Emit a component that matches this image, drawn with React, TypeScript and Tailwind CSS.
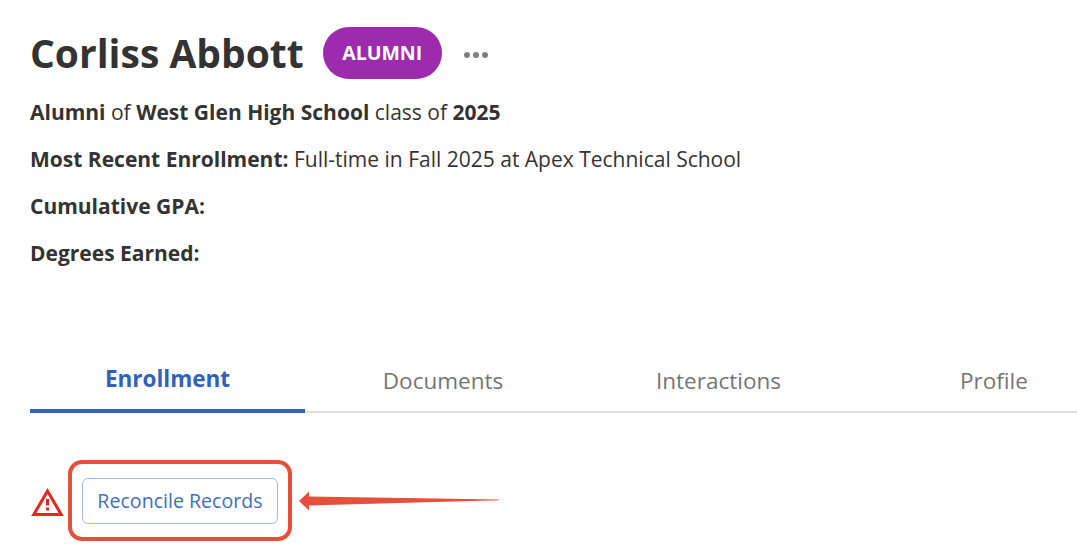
export default function App() {
  return (
    <div className="h-[555px] w-[1077px] overflow-hidden bg-white pl-[30px] pt-[27px] font-['Open_Sans',sans-serif] text-[#333333]">
      <div className="flex h-[52px] items-center">
        <h1 className="text-[39px] font-bold leading-[52px]">Corliss Abbott</h1>
        <span className="ml-[19px] flex h-[52px] w-[119px] shrink-0 items-center justify-center rounded-full bg-[#9c2bad] text-[19.5px] font-bold text-white">
          ALUMNI
        </span>
        <div className="ml-[22px] mt-[4px] flex gap-[3px]">
          <span className="h-[6px] w-[6px] rounded-full bg-[#808080]" />
          <span className="h-[6px] w-[6px] rounded-full bg-[#808080]" />
          <span className="h-[6px] w-[6px] rounded-full bg-[#808080]" />
        </div>
      </div>

      <div className="mt-[20px] flex flex-col gap-[20px] text-[21px] leading-[27px]">
        <p>
          <b>Alumni</b> of <b>West Glen High School</b> class of <b>2025</b>
        </p>
        <p>
          <b>Most Recent Enrollment:</b> Full-time in Fall 2025 at Apex Technical School
        </p>
        <p>
          <b>Cumulative GPA:</b>
        </p>
        <p>
          <b>Degrees Earned:</b>
        </p>
      </div>

      <div className="mt-[86px] flex h-[60px] border-b-2 border-[#e0e0e0] text-[22.5px] text-[#757575]">
        <div className="-mb-[2px] flex h-[60px] w-[275px] shrink-0 items-start justify-center border-b-4 border-[#2f62b8] pt-[9px] font-bold text-[#2f62b8]">
          Enrollment
        </div>
        <div className="flex w-[276px] shrink-0 items-start justify-center pt-[11px]">Documents</div>
        <div className="flex w-[275px] shrink-0 items-start justify-center pt-[11px]">Interactions</div>
        <div className="flex w-[276px] shrink-0 items-start justify-center pt-[11px]">Profile</div>
      </div>

      <div className="mt-[47px] flex items-center">
        <svg width="35" height="30" viewBox="0 0 35 30" fill="none" className="mt-[2px] shrink-0">
          <path d="M17.5 4 L31.2 27.5 H3.8 Z" stroke="#e8261c" strokeWidth="3" strokeLinejoin="miter" />
          <path d="M17.5 12 V18.5" stroke="#e8261c" strokeWidth="3" />
          <path d="M17.5 20.5 V23.5" stroke="#e8261c" strokeWidth="3" />
        </svg>
        <div className="ml-[3px] flex h-[81px] w-[224px] shrink-0 items-center justify-center rounded-[14px] border-4 border-[#e5503a]">
          <button className="h-[46px] w-[196px] rounded-[6px] border border-[#a3bbe6] bg-white pt-[1px] text-[19.6px] text-[#3f6fbd]">
            Reconcile Records
          </button>
        </div>
        <svg width="200" height="20" viewBox="0 0 200 20" className="ml-[8px] -translate-x-px shrink-0">
          <path d="M0 10 L10 0.5 V5.5 L200 8.5 V9.2 L10 14.5 V19.5 Z" fill="#e5503a" />
        </svg>
      </div>
    </div>
  );
}
